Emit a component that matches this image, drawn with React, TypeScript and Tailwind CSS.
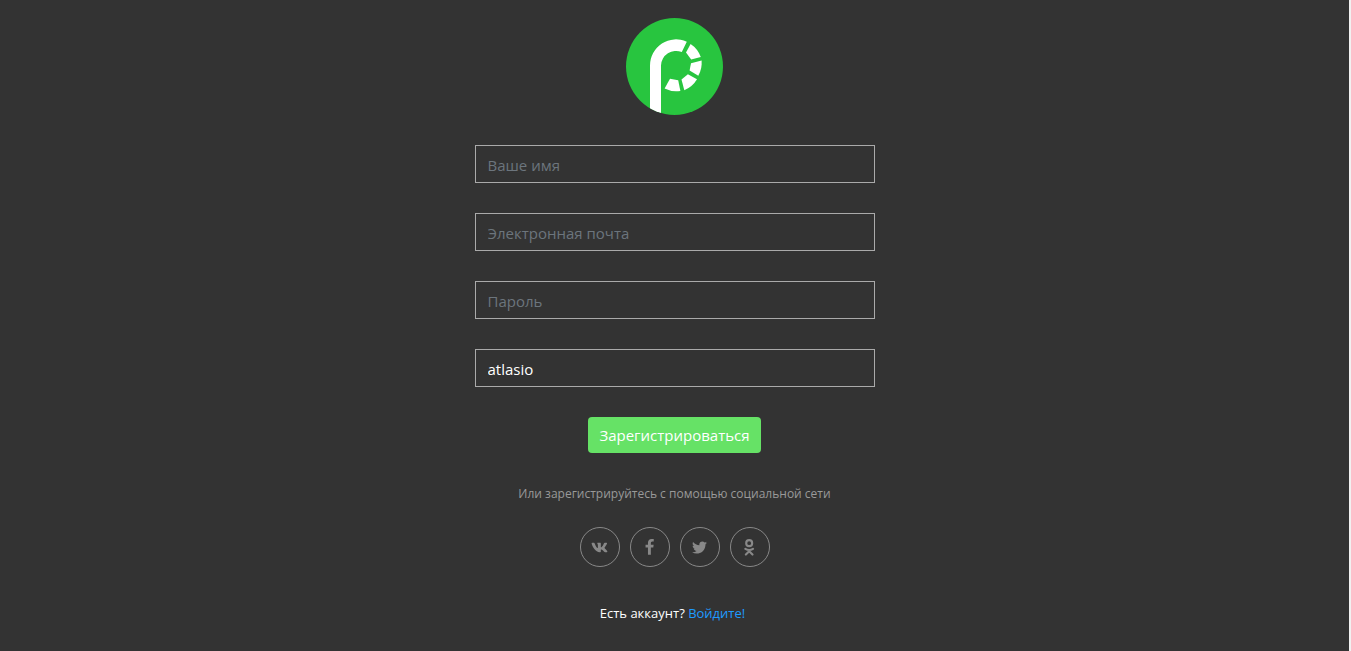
const inputClass =
  "h-[38px] w-full border border-[#aaaaaa] bg-transparent px-3 pt-0.5 text-[15px] text-white placeholder:text-[#6c757d] outline-none";

const fields = [
  { id: "name", type: "text", label: "Ваше имя" },
  { id: "email", type: "email", label: "Электронная почта" },
  { id: "password", type: "password", label: "Пароль" },
  { id: "referral", type: "text", label: "Реферал", value: "atlasio" },
];

const VkIcon = () => (
  <svg viewBox="0 0 576 512" className="h-[15px] w-[17px]" fill="currentColor" aria-hidden="true">
    <path d="M545 117.7c3.7-12.5 0-21.7-17.8-21.7h-58.9c-15 0-21.9 7.9-25.6 16.7 0 0-30 73.1-72.4 120.5-13.7 13.7-20 18.1-27.5 18.1-3.7 0-9.4-4.4-9.4-16.9V117.7c0-15-4.2-21.7-16.6-21.7h-92.6c-9.4 0-15 7-15 13.5 0 14.2 21.2 17.5 23.4 57.5v86.8c0 19-3.4 22.5-10.9 22.5-20 0-68.6-73.4-97.4-157.4-5.8-16.3-11.5-22.9-26.6-22.9H38.8c-16.8 0-20.2 7.9-20.2 16.7 0 15.6 20 93.1 93.1 195.5C160.4 378.1 229 416 291.4 416c37.5 0 42.1-8.4 42.1-22.9 0-66.8-3.4-73.1 15.4-73.1 8.7 0 23.7 4.4 58.7 38.1 40 40 46.6 57.9 69 57.9h58.9c16.8 0 25.3-8.4 20.4-25-11.2-34.9-86.9-106.7-90.3-111.5-8.7-11.2-6.2-16.2 0-26.2.1-.1 72-101.3 79.4-135.6z" />
  </svg>
);

const FacebookIcon = () => (
  <svg viewBox="0 0 1792 1792" className="size-[17px]" fill="currentColor" aria-hidden="true">
    <path d="M1343 12v264h-157q-86 0-116 36t-30 108v189h293l-39 296h-254v759h-306v-759h-255v-296h255v-218q0-186 104-288.500t277-102.500q147 0 228 12z" />
  </svg>
);

const TwitterIcon = () => (
  <svg viewBox="0 0 1792 1792" className="size-[17px]" fill="currentColor" aria-hidden="true">
    <path d="M1684 408q-67 98-162 167 1 14 1 42 0 130-38 259.500t-115.500 248.500-184.500 210.500-258 146-323 54.500q-271 0-496-145 35 4 78 4 225 0 401-138-105-2-188-64.500t-114-159.500q33 5 61 5 43 0 85-11-112-23-185.500-111.500t-73.500-205.500v-4q68 38 146 41-66-44-105-115t-39-154q0-88 44-163 121 149 294.500 238.500t371.500 99.500q-8-38-8-74 0-134 94.500-228.500t228.500-94.500q140 0 236 102 109-21 205-78-37 115-142 178 93-10 186-50z" />
  </svg>
);

const OkIcon = () => (
  <svg
    viewBox="0 0 16 16"
    className="size-[17px]"
    fill="none"
    stroke="currentColor"
    strokeWidth="2"
    strokeLinecap="round"
    strokeLinejoin="round"
    aria-hidden="true"
  >
    <circle cx="7.7" cy="3.9" r="2.8" />
    <path d="M4.1 9.2Q7.7 11.5 11.3 9.2M4.6 14.7L7.7 11.6L10.8 14.7M7.7 11.4V10.6" />
  </svg>
);

const socials = [
  { name: "ВКонтакте", icon: VkIcon },
  { name: "Facebook", icon: FacebookIcon },
  { name: "Twitter", icon: TwitterIcon },
  { name: "Одноклассники", icon: OkIcon },
];

const Logo = () => (
  <svg viewBox="0 0 97 97" className="size-[97px]" aria-hidden="true">
    <defs>
      <clipPath id="logo-circle">
        <circle cx="48.5" cy="48.5" r="48.5" />
      </clipPath>
    </defs>
    <circle cx="48.5" cy="48.5" r="48.5" fill="#28c53f" />
    <g fill="#fff" clipPath="url(#logo-circle)">
      <path d="M24 97V47.4A26 26 0 0 1 60.8 23.7L55.8 34.1A15 15 0 0 0 35 47.4V97Z" />
      <path d="M64.6 25.9A26 26 0 0 1 74.8 39L65.2 41.4L60 34.6Z" />
      <path d="M75.6 42.5A26 26 0 0 1 72.3 57.7L63.6 52.4L65 45.2Z" />
      <path d="M71 61.3A26 26 0 0 1 58.3 72.2L55.5 61.6L61.9 56.2Z" />
      <path d="M54.4 73A26 26 0 0 1 38.6 70.6L44 60.7L52.2 62.2Z" />
    </g>
  </svg>
);

export default function App() {
  return (
    <div className="min-h-screen border-r-2 border-[#f1f1f1] bg-[#333333] font-['Open_Sans','Noto_Sans',sans-serif] text-white">
      <main className="mx-auto flex w-full max-w-[400px] flex-col items-center pt-[18px]">
        <Logo />

        <form className="mt-[30px] flex w-full flex-col items-center gap-[30px]" onSubmit={(e) => e.preventDefault()}>
          {fields.map(({ id, type, label, value }) => (
            <input
              key={id}
              id={id}
              type={type}
              aria-label={label}
              placeholder={label}
              defaultValue={value}
              className={inputClass}
            />
          ))}
          <button type="submit" className="h-9 rounded bg-[#66e266] px-[11px] text-[15px] text-white">
            Зарегистрироваться
          </button>
        </form>

        <p className="mt-[30px] text-xs leading-[22px] text-[#999999]">
          Или зарегистрируйтесь с помощью социальной сети
        </p>

        {/* Social sign up */}
        <div className="mt-[22px] flex gap-[10px]">
          {socials.map(({ name, icon: Icon }) => (
            <a
              key={name}
              href="#"
              aria-label={name}
              className="flex size-10 items-center justify-center rounded-full border border-[#888888] text-[#888888]"
            >
              <Icon />
            </a>
          ))}
        </div>

        <p className="mt-[35px] pr-1 text-[13px] leading-[22px]">
          Есть аккаунт?{" "}
          <a href="#" className="text-[#1e9bff]">
            Войдите!
          </a>
        </p>
      </main>
    </div>
  );
}
